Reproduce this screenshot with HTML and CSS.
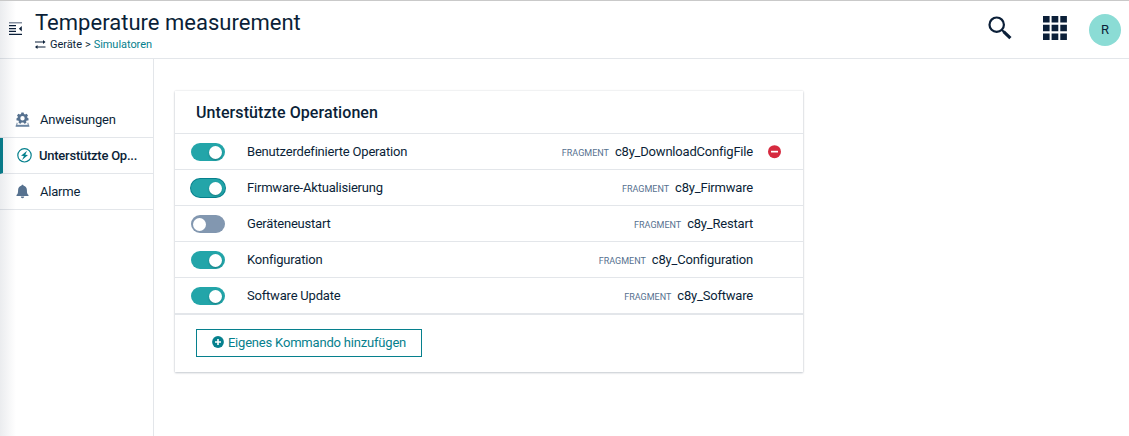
FILE: index.html
```html
<!DOCTYPE html>
<html lang="de">
<head>
<meta charset="utf-8">
<title>Temperature measurement</title>
<link rel="stylesheet" href="styles.css">
</head>
<body>
<div class="app">
  <header class="header">
    <svg class="nav-toggle" width="14" height="13" viewBox="0 0 14 13"><path fill="#8791a0" d="M0 0h13v1.500H0z"/><path fill="#0b1f38" d="M0 3h7v1.300H0zM0 6h7v1.300H0zM0 8.800h7v1.300H0zM0 11.700h13V13H0zM12.800 4v5.400L9.900 6.700z"/></svg>
    <div class="heading">
      <h1 class="title">Temperature measurement</h1>
      <nav class="breadcrumb">
        <svg class="crumb-icon" width="11" height="9" viewBox="0 0 11 9"><path fill="#0b1f38" d="M0 1.500h8V0l2.500 2L8 4V2.500H0zM10.500 6.500h-8V5L0 7l2.500 2V7.500h8z"/></svg>
        <span>Geräte</span><span class="sep">&gt;</span><a class="crumb-link">Simulatoren</a>
      </nav>
    </div>
    <div class="actions">
      <svg class="search" width="24" height="24" viewBox="0 0 24 24" fill="none" stroke="#0b1f38"><circle cx="8.700" cy="8.700" r="7.200" stroke-width="2.200"/><path d="M14 14l2 2" stroke-width="2"/><path d="M15.600 15.600l6.800 6.500" stroke-width="3.200"/></svg>
      <svg class="grid" width="24" height="24" viewBox="0 0 24 24" fill="#0b1f38"><path d="M0 0h6.600v6.600H0zM8.600 0h6.700v6.600H8.600zM17.300 0h6.600v6.600h-6.600zM0 8.700h6.600v6.600H0zM8.600 8.700h6.700v6.600H8.600zM17.300 8.700h6.600v6.600h-6.600zM0 17.400h6.600V24H0zM8.600 17.400h6.700V24H8.600zM17.300 17.400h6.600V24h-6.600z"/></svg>
      <span class="avatar">R</span>
    </div>
  </header>
  <div class="body">
    <nav class="sidebar">
      <a class="tab">
        <svg class="tab-icon" width="16" height="16" viewBox="0 0 16 16"><path d="M2.300 10.800 1.200 14.200h12.600l-1.100-3.400" fill="none" stroke="#9aabbd" stroke-width="1.300"/><path d="M1 12.800h13v1.800H1z" fill="#6c86a3"/><path fill="#56718f" fill-rule="evenodd" d="M6.400 .5h2.200l.4 1.600 1.100.5 1.500-.8 1.400 1.700-.9 1.300.3 1 1.200.6-.2 2-1.700.2-.6.9.3 1.500-2 .8-1-1.200H6.600l-1 1.200-2-.8.3-1.500-.6-.9-1.700-.2-.2-2 1.200-.6.3-1L2 3.500l1.400-1.700 1.500.8L6 2.100zM7.500 4a2.200 2.200 0 1 0 0 4.400 2.200 2.200 0 0 0 0-4.400z"/></svg>
        <span>Anweisungen</span>
      </a>
      <a class="tab active">
        <svg class="tab-icon" width="16" height="16" viewBox="0 0 16 16"><circle cx="8.500" cy="7.300" r="6.700" fill="none" stroke="#06808d" stroke-width="1.200"/><path d="M11 2.800 5 7.800l2.900.1L6.100 12 12 6.900 9.300 6.700z" fill="#06808d"/></svg>
        <span>Unterstützte Op...</span>
      </a>
      <a class="tab">
        <svg class="tab-icon" width="16" height="16" viewBox="0 0 16 16" fill="#56718f"><path d="M7.500 .7c.7 0 1.100.5 1.100 1.100 2 .5 3.300 2.200 3.300 4.300 0 2.800.3 4.100 1.600 5v.9h-12v-.9c1.300-.9 1.600-2.200 1.600-5 0-2.100 1.300-3.800 3.300-4.300 0-.6.4-1.100 1.100-1.100zM5.800 12.600h3.400c0 1-.8 1.600-1.700 1.600s-1.700-.6-1.700-1.600z"/></svg>
        <span>Alarme</span>
      </a>
    </nav>
    <main class="content">
      <section class="card">
        <h2 class="card-title">Unterstützte Operationen</h2>
        <ul class="ops">
          <li class="op"><span class="switch on"></span><span class="name">Benutzerdefinierte Operation</span><span class="label">FRAGMENT</span><span class="value">c8y_DownloadConfigFile</span><svg class="remove" width="14" height="14" viewBox="0 0 14 14"><circle cx="7.500" cy="6.700" r="6.500" fill="#d62a3f"/><path d="M4 5.800h7v1.700H4z" fill="#fff"/></svg></li>
          <li class="op"><span class="switch on focused"></span><span class="name">Firmware-Aktualisierung</span><span class="label">FRAGMENT</span><span class="value">c8y_Firmware</span></li>
          <li class="op"><span class="switch"></span><span class="name">Geräteneustart</span><span class="label">FRAGMENT</span><span class="value">c8y_Restart</span></li>
          <li class="op"><span class="switch on"></span><span class="name">Konfiguration</span><span class="label">FRAGMENT</span><span class="value">c8y_Configuration</span></li>
          <li class="op"><span class="switch on"></span><span class="name">Software Update</span><span class="label">FRAGMENT</span><span class="value">c8y_Software</span></li>
        </ul>
        <div class="card-footer">
          <button class="add"><svg class="add-icon" width="12" height="12" viewBox="0 0 12 12"><circle cx="6" cy="6" r="5.900" fill="#06808d"/><path d="M5.200 3h1.600v2.200H9v1.600H6.800V9H5.200V6.800H3V5.200h2.200z" fill="#fff"/></svg><span>Eigenes Kommando hinzufügen</span></button>
        </div>
      </section>
    </main>
  </div>
  <div class="edge-shadow"></div>
</div>
</body>
</html>
```
FILE: styles.css
```css
* { box-sizing: border-box; }
body {
  margin: 0;
  background: #fff;
  color: #0b1f38;
  font: 13px/20px Roboto, sans-serif;
  letter-spacing: -0.2px;
}
.app {
  position: relative;
  display: flex;
  flex-direction: column;
  height: 436px;
  overflow: hidden;
}
.header {
  display: flex;
  height: 59px;
  border-top: 1px solid #c9c9c9;
  border-bottom: 1px solid #e3e6ea;
}
.nav-toggle { margin: 21px 12px 0 9px; }
.heading { padding-top: 8px; }
.title {
  margin: 0;
  font-size: 22px;
  line-height: 28px;
  font-weight: 400;
  letter-spacing: 0.02px;
}
.breadcrumb {
  display: flex;
  align-items: center;
  font-size: 11px;
  line-height: 16px;
  letter-spacing: -0.05px;
}
.crumb-icon { margin: -2px 4px 0 0; }
.sep { margin: 0 3px; }
.crumb-link { color: #06808d; }
.actions {
  display: flex;
  margin-left: auto;
  padding-right: 8px;
}
.search { margin: 15px 31px 0 0; }
.grid { margin: 15px 22px 0 0; }
.avatar {
  width: 32px;
  height: 32px;
  margin-top: 13px;
  border-radius: 50%;
  background: #8bdcd5;
  text-align: center;
  line-height: 31px;
}
.body {
  display: flex;
  flex: 1;
}
.sidebar {
  width: 154px;
  padding-top: 43px;
  border-right: 1px solid #e3e6ea;
}
.tab {
  display: flex;
  align-items: center;
  height: 36px;
  padding-left: 15px;
  border-bottom: 1px solid #e3e6ea;
  white-space: nowrap;
}
.tab-icon { margin-right: 9px; }
.active {
  padding-left: 13px;
  border-left: 3px solid #06808d;
  font-weight: 500;
  letter-spacing: -0.24px;
}
.active .tab-icon { margin-right: 7px; }
.content { padding: 32px 0 0 21px; }
.card {
  width: 628px;
  height: 281px;
  box-shadow: 0 0 2px rgba(11, 31, 56, 0.14), 0 1px 2px rgba(11, 31, 56, 0.2);
}
.card-title {
  height: 42px;
  margin: 0;
  padding-left: 21px;
  font-size: 16px;
  line-height: 44px;
  font-weight: 500;
  letter-spacing: 0.08px;
}
.ops {
  margin: 0;
  padding: 0;
  border-bottom: 2px solid #e3e6ea;
  list-style: none;
}
.op {
  display: flex;
  align-items: center;
  height: 36px;
  padding: 1px 50px 0 16px;
  border-top: 1px solid #e3e6ea;
}
.switch {
  width: 34px;
  height: 18px;
  padding: 3px 2px;
  border-radius: 9px;
  background: #8297b0;
}
.switch::before {
  display: block;
  width: 13px;
  height: 13px;
  border-radius: 50%;
  background: #fff;
  content: "";
}
.on { background: #23a5a9; }
.on::before {
  margin-left: 16px;
  box-shadow: 0 1px 2px rgba(0, 60, 70, 0.4);
}
.focused { box-shadow: 0 0 0 1px #06808d; }
.name { margin-left: 22px; }
.label {
  margin: 1px 6px 0 auto;
  color: #56718f;
  font-size: 9px;
  letter-spacing: 0;
}
.remove { margin: 0 -28px 0 14px; }
.card-footer { padding: 14px 21px; }
.add {
  display: flex;
  align-items: center;
  justify-content: center;
  gap: 4px;
  width: 226px;
  height: 28px;
  padding: 0;
  border: 1px solid #06808d;
  background: #fff;
  color: #06808d;
  font: 13px/20px Roboto, sans-serif;
  letter-spacing: -0.19px;
}
.add-icon { margin-top: -3px; }
.edge-shadow {
  position: absolute;
  top: 1px;
  bottom: 0;
  left: 0;
  width: 16px;
  background: linear-gradient(to right, rgba(30, 45, 75, 0.09), rgba(30, 45, 75, 0));
  pointer-events: none;
}
```
